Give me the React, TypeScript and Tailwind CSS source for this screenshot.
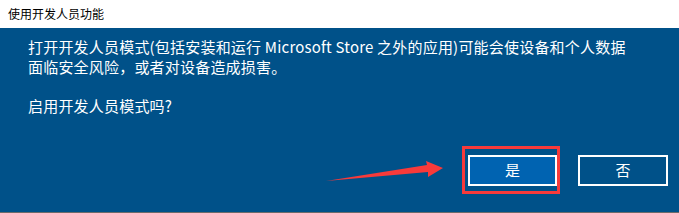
export default function App() {
  return (
    <div className="relative flex h-[213px] w-[679px] flex-col overflow-hidden bg-white font-['Noto_Sans_CJK_SC','Noto_Sans',sans-serif]">
      {/* Title bar */}
      <div className="flex h-[28px] items-center bg-white pl-[8px] text-[12px] text-black">
        使用开发人员功能
      </div>

      {/* Dialog body */}
      <div className="flex flex-1 flex-col bg-[#005189] text-white">
        <div className="flex flex-col gap-[19px] pl-[28px] pt-[9px] text-[15px] leading-[20px] tracking-[0.2px]">
          <p>
            打开开发人员模式(包括安装和运行 Microsoft Store 之外的应用)可能会使设备和个人数据
            <br />
            面临安全风险，或者对设备造成损害。
          </p>
          <p>启用开发人员模式吗?</p>
        </div>

        <div className="mt-auto flex justify-end gap-[21px] pb-[26px] pr-[11px]">
          <button className="flex h-[31px] w-[89px] items-center justify-center border-2 border-white bg-[#0063b1] text-[15px] text-white">
            是
          </button>
          <button className="flex h-[31px] w-[90px] items-center justify-center border-2 border-white bg-[#005189] text-[15px] text-white">
            否
          </button>
        </div>
      </div>
      <div className="h-[1px] bg-[#6b6b6b]" />

      {/* Annotation: red highlight box */}
      <div className="absolute left-[462px] top-[146px] h-[48px] w-[98px] border-[3px] border-[#f83a3a]" />

      {/* Annotation: red arrow */}
      <svg className="absolute left-0 top-0" width="679" height="213" viewBox="0 0 679 213">
        <polygon
          points="326,181 427,165 426,161 443,168 428,177 428,172"
          fill="#f83a3a"
        />
      </svg>
    </div>
  );
}
